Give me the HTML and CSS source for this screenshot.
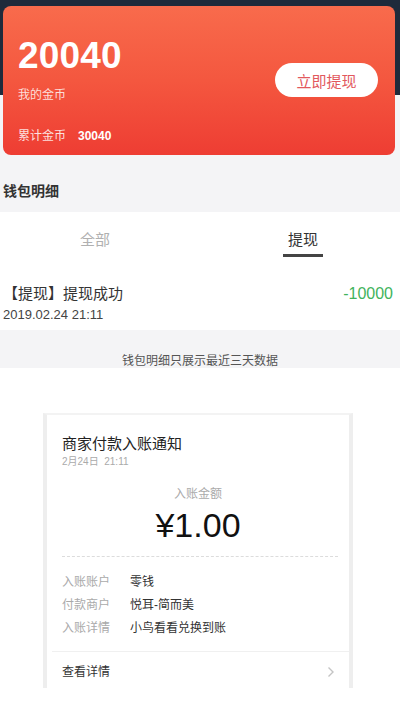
FILE: index.html
```html
<!DOCTYPE html>
<html lang="zh">
<head>
<meta charset="utf-8">
<title>钱包</title>
<link rel="stylesheet" href="styles.css">
</head>
<body>
<div class="page">
  <div class="hero">
    <div class="coin-card">
      <div class="coin-info">
        <div class="coin-num">20040</div>
        <div class="coin-label">我的金币</div>
        <div class="coin-total">累计金币<span class="total-num">30040</span></div>
      </div>
      <div class="withdraw-btn">立即提现</div>
    </div>
  </div>
  <div class="section-title">钱包明细</div>
  <div class="detail">
    <div class="tabs">
      <div class="tab">全部</div>
      <div class="tab active">提现</div>
    </div>
    <div class="record">
      <div class="record-left">
        <div class="record-title">【提现】提现成功</div>
        <div class="record-date">2019.02.24 21:11</div>
      </div>
      <div class="record-amount">-10000</div>
    </div>
  </div>
  <div class="notice">钱包明细只展示最近三天数据</div>
  <div class="msg-area">
    <div class="msg-card">
      <div class="msg-title">商家付款入账通知</div>
      <div class="msg-time">2月24日&nbsp;&nbsp;21:11</div>
      <div class="msg-amount-label">入账金额</div>
      <div class="msg-amount">¥1.00</div>
      <div class="msg-dash"></div>
      <div class="msg-rows">
        <div class="msg-row"><span class="msg-key">入账账户</span><span class="msg-val">零钱</span></div>
        <div class="msg-row"><span class="msg-key">付款商户</span><span class="msg-val">悦耳-简而美</span></div>
        <div class="msg-row"><span class="msg-key">入账详情</span><span class="msg-val">小鸟看看兑换到账</span></div>
      </div>
      <div class="msg-link">
        <span>查看详情</span>
        <svg class="chev" width="8" height="12" viewBox="0 0 8 12"><path d="M1.5 1.5 L6 6 L1.5 10.5" fill="none" stroke="#c4c4c4" stroke-width="1.4"/></svg>
      </div>
    </div>
  </div>
</div>
</body>
</html>
```

FILE: styles.css
```css
* { box-sizing: border-box; }
html, body { margin: 0; padding: 0; background: #fff; }
body {
  font-family: "Liberation Sans", "Noto Sans CJK SC", sans-serif;
  width: 400px;
  color: #333;
}
.page { width: 400px; }

.hero {
  background: linear-gradient(#1f2a3b 0, #1f2a3b 95px, #f4f4f6 95px);
  padding: 6px 5px 0 3px;
}
.coin-card {
  height: 149px;
  border-radius: 8px;
  background: linear-gradient(180deg, #f86b4c 0%, #f4573f 50%, #ee3d33 100%);
  display: flex;
  align-items: center;
  justify-content: space-between;
  padding: 0 17px 0 15px;
}
.coin-info {
  align-self: flex-start;
  display: flex;
  flex-direction: column;
  color: #fff;
  padding-top: 30px;
}
.coin-num {
  font-size: 37px;
  font-weight: bold;
  line-height: 40px;
  letter-spacing: 0.2px;
}
.coin-label {
  font-size: 12px;
  line-height: 16px;
  margin-top: 11px;
  color: rgba(255,255,255,0.82);
}
.coin-total {
  font-size: 12px;
  line-height: 16px;
  margin-top: 25px;
  color: rgba(255,255,255,0.85);
}
.total-num {
  font-weight: bold;
  margin-left: 12px;
  color: #fff;
}
.withdraw-btn {
  width: 103px;
  height: 34px;
  border-radius: 17px;
  background: #fff;
  color: #e2585d;
  font-size: 15px;
  display: flex;
  align-items: center;
  justify-content: center;
  margin-top: -1px;
}

.section-title {
  background: #f4f4f6;
  height: 57px;
  padding: 27px 0 0 3px;
  font-size: 14px;
  font-weight: bold;
  color: #333;
  line-height: 18px;
}

.detail { background: #fff; height: 118px; }
.tabs {
  display: flex;
  gap: 168px;
  padding-left: 75px;
  height: 47px;
}
.tab {
  width: 40px;
  text-align: center;
  font-size: 15px;
  color: #b0b0b0;
  padding-top: 19px;
  line-height: 18px;
}
.tab.active {
  color: #333;
  position: relative;
}
.tab.active::after {
  content: "";
  position: absolute;
  left: 0;
  right: 0;
  bottom: 2px;
  height: 3px;
  background: #444;
}
.record {
  display: flex;
  justify-content: space-between;
  align-items: flex-start;
  padding: 26px 7px 0 3px;
}
.record-title {
  font-size: 15px;
  line-height: 18px;
  color: #333;
}
.record-date {
  font-size: 13px;
  line-height: 16px;
  margin-top: 4px;
  color: #444;
}
.record-amount {
  font-size: 16px;
  line-height: 18px;
  color: #41b35c;
}

.notice {
  background: #f4f4f6;
  height: 38px;
  text-align: center;
  font-size: 12px;
  color: #555;
  padding-top: 23px;
  line-height: 16px;
}

.msg-area {
  background: #fff;
  padding: 45px 0 0 43px;
  height: 336px;
}
.msg-card {
  width: 310px;
  height: 275px;
  border-left: 4px solid #eeeeee;
  border-right: 4px solid #eeeeee;
  border-top: 2px solid #f3f3f3;
  background: #fff;
  padding-top: 19px;
  display: flex;
  flex-direction: column;
}
.msg-title {
  font-size: 15px;
  line-height: 20px;
  color: #222;
  padding-left: 15px;
}
.msg-time {
  font-size: 10px;
  line-height: 14px;
  color: #aaa;
  padding-left: 15px;
  margin-top: 1px;
}
.msg-amount-label {
  text-align: center;
  font-size: 12px;
  line-height: 16px;
  color: #aaa;
  margin-top: 17px;
}
.msg-amount {
  text-align: center;
  font-size: 34px;
  line-height: 40px;
  color: #111;
  margin-top: 3px;
}
.msg-dash {
  margin: 11px 11px 0 15px;
  border-top: 1px dashed #dcdcdc;
}
.msg-rows {
  padding: 14px 0 0 15px;
  display: flex;
  flex-direction: column;
}
.msg-row {
  height: 23px;
  line-height: 23px;
  font-size: 12px;
  display: flex;
}
.msg-key { width: 68px; color: #aaa; }
.msg-val { color: #333; }
.msg-link {
  margin-top: 11px;
  border-top: 1px solid #f0f0f0;
  margin-left: 5px;
  padding: 10px 14px 0 10px;
  display: flex;
  justify-content: space-between;
  align-items: center;
  font-size: 12px;
  line-height: 20px;
  color: #333;
}
.chev { display: block; }
```
